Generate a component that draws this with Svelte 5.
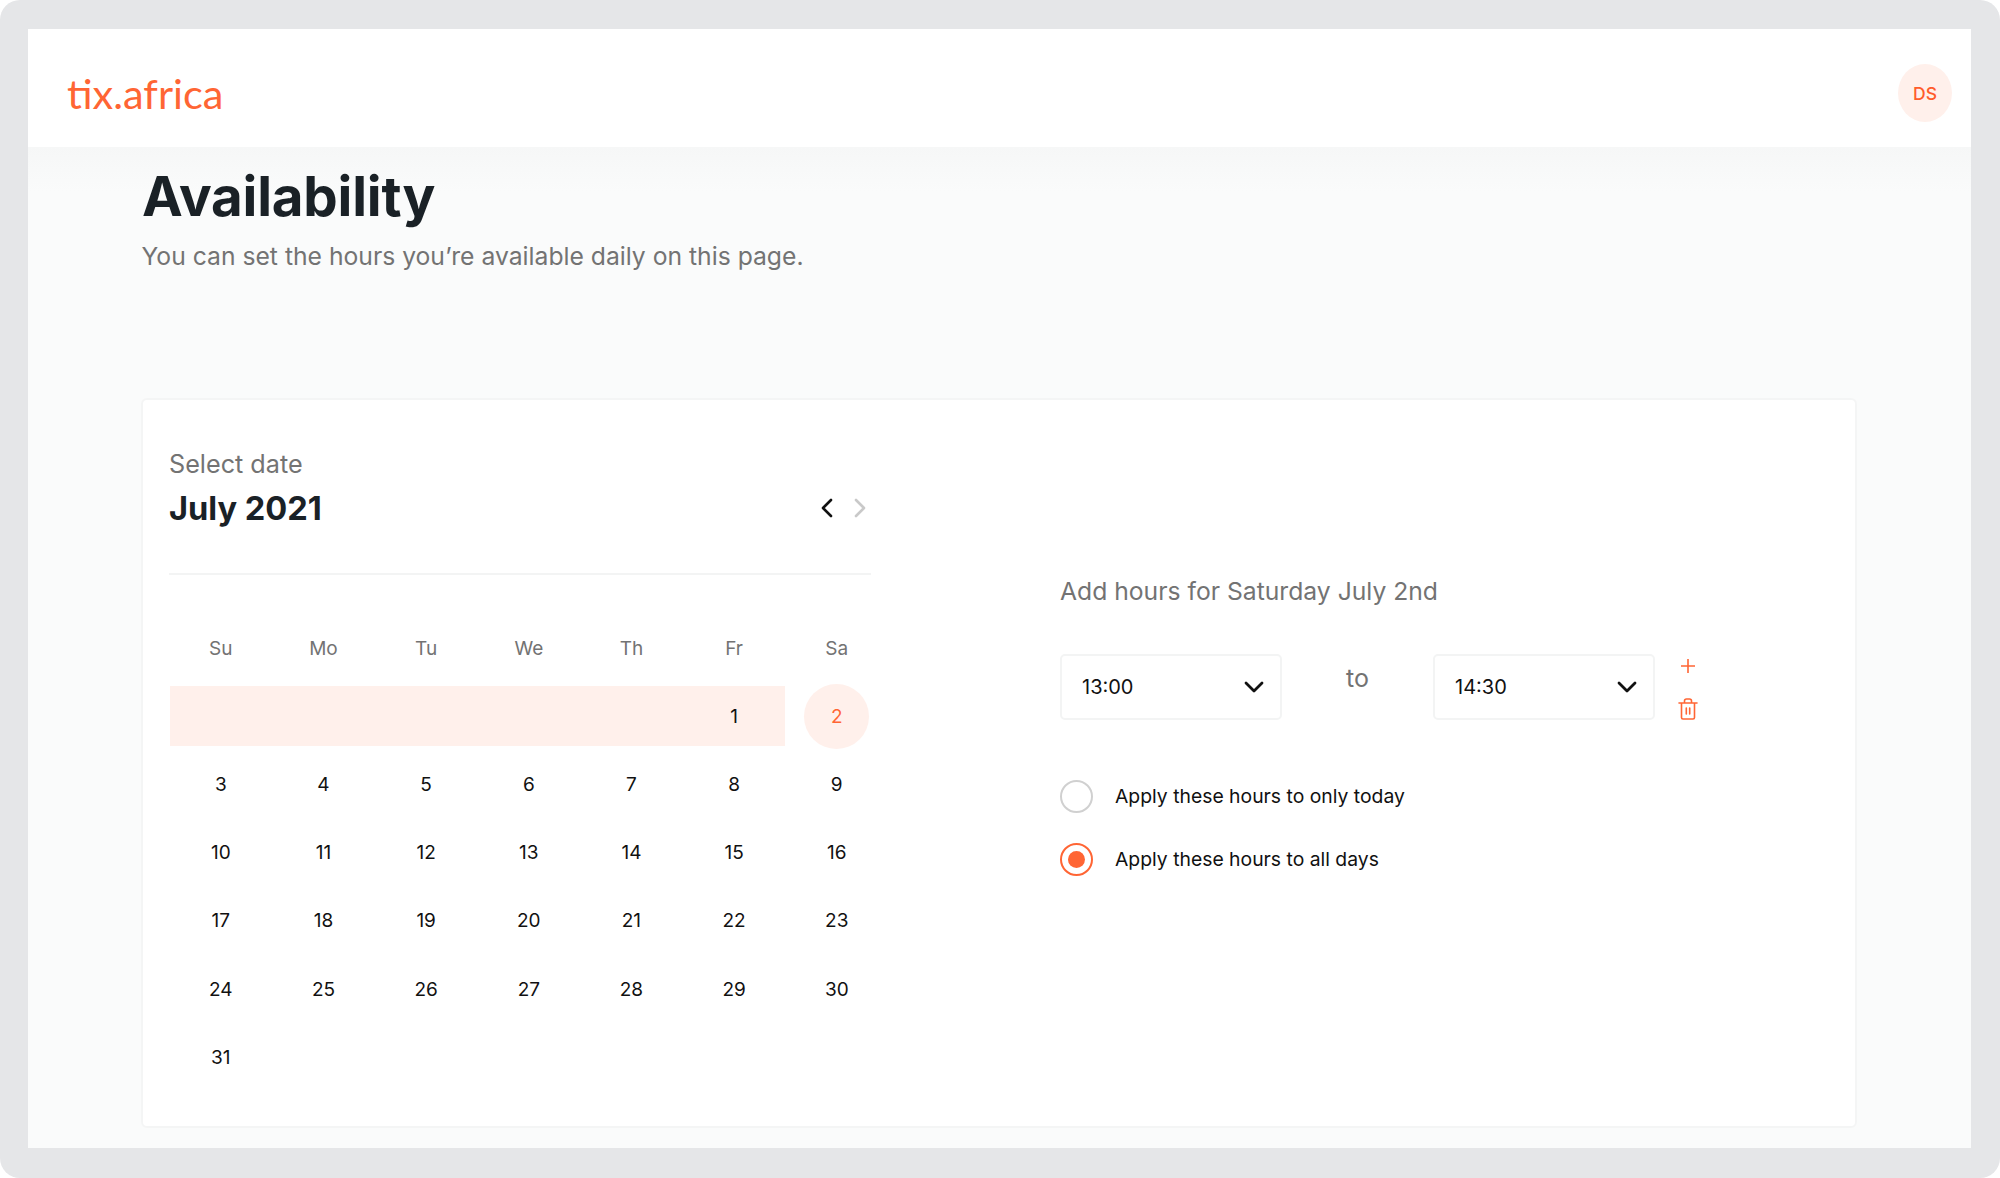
<script>
  const weekdays = ['Su','Mo','Tu','We','Th','Fr','Sa'];
  const blanks = [0,1,2,3,4];
  const days = Array.from({length:31},(_,i)=>i+1);
</script>

<div class="frame">
  <div class="screen">
    <header class="topbar">
      <span class="logo">tix.africa</span>
      <span class="avatar">DS</span>
    </header>
    <main class="content">
      <h1>Availability</h1>
      <p class="sub">You can set the hours you’re available daily on this page.</p>
      <section class="card">
        <div class="calendar">
          <div class="cal-head">
            <div>
              <div class="eyebrow">Select date</div>
              <div class="month">July 2021</div>
            </div>
            <div class="nav">
              <svg width="16" height="22" viewBox="0 0 16 22" fill="none" stroke="#111" stroke-width="2.6" stroke-linecap="round" stroke-linejoin="round"><path d="M12 3 4 11l8 8"/></svg>
              <svg width="16" height="22" viewBox="0 0 16 22" fill="none" stroke="#c9c9c9" stroke-width="2.6" stroke-linecap="round" stroke-linejoin="round"><path d="m4 3 8 8-8 8"/></svg>
            </div>
          </div>
          <div class="grid">
            {#each weekdays as w}<div class="wd">{w}</div>{/each}
            {#each blanks as b}<div class="day range"></div>{/each}
            {#each days as d}
              <div class="day" class:range={d===1}>
                {#if d===2}<span class="selected">{d}</span>{:else}{d}{/if}
              </div>
            {/each}
          </div>
        </div>
        <div class="hours">
          <h2>Add hours for Saturday July 2nd</h2>
          <div class="range-row">
            <div class="select"><span>13:00</span>
              <svg width="22" height="14" viewBox="0 0 22 14" fill="none" stroke="#111" stroke-width="2.8" stroke-linecap="round" stroke-linejoin="round"><path d="m3 3 8 8 8-8"/></svg>
            </div>
            <span class="to">to</span>
            <div class="select"><span>14:30</span>
              <svg width="22" height="14" viewBox="0 0 22 14" fill="none" stroke="#111" stroke-width="2.8" stroke-linecap="round" stroke-linejoin="round"><path d="m3 3 8 8 8-8"/></svg>
            </div>
            <div class="actions">
              <svg width="16" height="16" viewBox="0 0 16 16" fill="none" stroke="#ff6534" stroke-width="1.6"><path d="M8 1v14M1 8h14"/></svg>
              <svg width="20" height="22" viewBox="0 0 20 22" fill="none" stroke="#ff6534" stroke-width="1.6" stroke-linecap="round" stroke-linejoin="round"><path d="M1 5h18M3.5 5v14.5a1.5 1.5 0 0 0 1.5 1.5h10a1.5 1.5 0 0 0 1.5-1.5V5M6.5 5V3a2 2 0 0 1 2-2h3a2 2 0 0 1 2 2v2M8.3 10v6M11.7 10v6"/></svg>
            </div>
          </div>
          <div class="radios">
            <div class="radio"><span class="dot"></span>Apply these hours to only today</div>
            <div class="radio"><span class="dot on"></span>Apply these hours to all days</div>
          </div>
        </div>
      </section>
    </main>
  </div>
</div>

<style>
  :global(body) { margin: 0; background: #fff; }
  .frame {
    width: 2000px; height: 1178px; box-sizing: border-box;
    padding: 29px 29px 30px 28px;
    background: #e5e6e8; border-radius: 20px;
    font-family: Inter, "Liberation Sans", sans-serif;
  }
  .screen { height: 100%; display: flex; flex-direction: column; background: #fafbfb; overflow: hidden; }
  .topbar {
    height: 118px; flex: none; background: #fff; display: flex; align-items: center;
    justify-content: space-between; padding: 0 19px 0 39px; box-sizing: border-box;
  }
  .logo { font-family: Lato, sans-serif; font-size: 41.5px; color: #ff6534; line-height: 1; position: relative; top: 6px; }
  .avatar {
    width: 54px; height: 58px; border-radius: 50%; background: #fff0eb; color: #ff5c2b;
    display: flex; align-items: center; justify-content: center;
    font-size: 17.5px; font-weight: 500; position: relative; top: 5px;
  }
  .content {
    flex: 1; padding: 0 114px 0 113px;
    background: linear-gradient(#f6f7f7, #fafbfb 45px);
  }
  h1 { margin: 14px 0 0 1px; font-size: 54.7px; line-height: 70px; font-weight: 700; color: #1a2126; letter-spacing: -0.2px; }
  .sub { margin: 9px 0 0 0.5px; font-size: 24.7px; line-height: 32px; color: #737373; }
  .card {
    margin-top: 126px; height: 730px; box-sizing: border-box;
    background: #fff; border: 2px solid #f4f5f5; border-radius: 6px;
    display: flex; padding: 0 0 0 26px;
  }
  .calendar { width: 702px; padding-top: 47px; }
  .cal-head {
    display: flex; justify-content: space-between; align-items: flex-end;
    height: 128px; box-sizing: border-box; padding-bottom: 43px;
    border-bottom: 2px solid #f3f4f4;
  }
  .eyebrow { font-size: 25.2px; line-height: 34px; color: #737373; }
  .month { font-size: 32.6px; line-height: 44px; font-weight: 700; color: #1a2126; margin-top: 5px; }
  .nav { display: flex; gap: 17px; padding: 0 1px 11px 0; margin-right: 2px; }
  .grid { display: grid; grid-template-columns: repeat(7, 102.67px); grid-auto-rows: 68.2px; margin-top: 39px; margin-left: 0.5px; }
  .wd { display: flex; align-items: center; justify-content: center; font-size: 19px; color: #737373; }
  .day { display: flex; align-items: center; justify-content: center; font-size: 19px; color: #111; position: relative; }
  .range { background: #fff0eb; background-clip: content-box; padding: 4px 0; box-sizing: border-box; }
  .selected {
    width: 65px; height: 65px; border-radius: 50%; background: #fff0eb; color: #ff6534;
    display: flex; align-items: center; justify-content: center;
  }
  .hours { margin-left: 189px; padding-top: 174px; }
  h2 { margin: 0; font-size: 24.7px; line-height: 34px; font-weight: 400; color: #737373; }
  .range-row { display: flex; margin-top: 46px; align-items: flex-start; }
  .select {
    width: 222px; height: 66px; box-sizing: border-box; border: 2px solid #f3f4f4; border-radius: 5px;
    display: flex; align-items: center; justify-content: space-between; padding: 0 15px 0 20px;
    font-size: 20px; color: #111;
  }
  .to { width: 151px; text-align: center; font-size: 25px; line-height: 34px; color: #737373; margin-top: 7px; }
  .actions { display: flex; flex-direction: column; align-items: center; gap: 24px; margin: 4px 0 0 23px; }
  .radios { display: flex; flex-direction: column; gap: 31px; margin-top: 60px; }
  .radio { display: flex; align-items: center; gap: 22px; font-size: 19.35px; font-weight: 400; color: #111; height: 32px; }
  .dot {
    width: 33px; height: 33px; box-sizing: border-box; border-radius: 50%; border: 2px solid #d0d0d0; flex: none;
    display: flex; align-items: center; justify-content: center;
  }
  .dot.on { border-color: #ff6534; }
  .dot.on::after { content: ""; width: 17px; height: 17px; border-radius: 50%; background: #ff6534; }
</style>
